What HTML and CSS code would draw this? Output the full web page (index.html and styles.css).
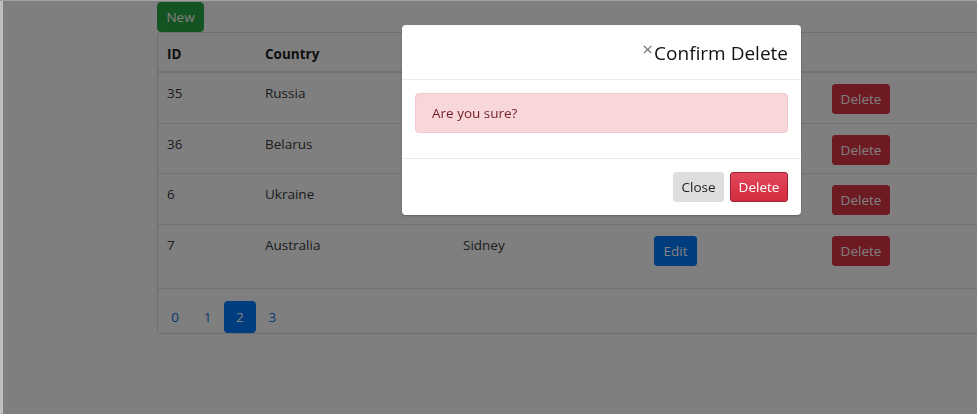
FILE: index.html
```html
<!DOCTYPE html>
<html>
<head>
<meta charset="utf-8">
<link rel="stylesheet" href="styles.css">
</head>
<body>
<div class="page">
  <div class="container">
    <button class="btn btn-new">New</button>
    <div class="card">
      <table class="grid">
        <thead>
          <tr><th class="c1">ID</th><th class="c2">Country</th><th class="c3">City</th><th class="c4"></th><th class="c5"></th></tr>
        </thead>
        <tbody>
          <tr><td>35</td><td>Russia</td><td>Moscow</td><td><button class="btn btn-edit">Edit</button></td><td><button class="btn btn-del">Delete</button></td></tr>
          <tr><td>36</td><td>Belarus</td><td>Minsk</td><td><button class="btn btn-edit">Edit</button></td><td><button class="btn btn-del">Delete</button></td></tr>
          <tr><td>6</td><td>Ukraine</td><td>Kiev</td><td><button class="btn btn-edit">Edit</button></td><td><button class="btn btn-del">Delete</button></td></tr>
          <tr class="last"><td>7</td><td>Australia</td><td>Sidney</td><td><button class="btn btn-edit">Edit</button></td><td><button class="btn btn-del">Delete</button></td></tr>
        </tbody>
      </table>
      <div class="pager">
        <a class="page-link">0</a>
        <a class="page-link">1</a>
        <a class="page-link active">2</a>
        <a class="page-link">3</a>
      </div>
    </div>
  </div>
</div>
<div class="backdrop"></div>
<div class="frame-left"></div>
<div class="frame-top"></div>
<div class="modal">
  <div class="modal-header">
    <span class="close">×</span>
    <h4 class="modal-title">Confirm Delete</h4>
  </div>
  <div class="modal-body">
    <div class="alert">Are you sure?</div>
  </div>
  <div class="modal-footer">
    <button class="btn btn-close">Close</button>
    <button class="btn btn-confirm">Delete</button>
  </div>
</div>
</body>
</html>
```
FILE: styles.css
```css
html, body {
  margin: 0;
  padding: 0;
  height: 100%;
  overflow: hidden;
  background: #fff;
  font-family: "Open Sans", "Noto Sans", sans-serif;
  font-size: 13.5px;
  color: #212529;
}

.page {
  padding-top: 2px;
}

.container {
  margin-left: 157px;
  width: 820px;
}

.btn {
  font-family: inherit;
  font-size: 13.5px;
  border: 1px solid transparent;
  border-radius: 3px;
  height: 30px;
  padding: 0 11px;
  color: #fff;
  cursor: pointer;
  line-height: 28px;
}

.btn-new {
  display: block;
  width: 47px;
  height: 30px;
  padding: 0;
  background: #28a745;
  border-color: #28a745;
  border-radius: 4px;
}

.card {
  border: 1px solid rgba(0, 0, 0, 0.125);
  border-right: 0;
  border-radius: 3px 0 0 3px;
}

.grid {
  border-collapse: collapse;
  width: 100%;
  table-layout: fixed;
}

.grid th {
  text-align: left;
  font-weight: 700;
  height: 35px;
  padding: 3px 9px 0;
  border-bottom: 2px solid #dee2e6;
  line-height: 20px;
  color: #1b1e21;
}

.grid .c1 { width: 80px; }
.grid .c2 { width: 180px; }
.grid .c3 { width: 173px; }
.grid .c4 { width: 160px; }

.grid td {
  vertical-align: top;
  padding: 10px 9px 8.5px;
  line-height: 20px;
  border-top: 1px solid #dee2e6;
  color: #3a3a3a;
}

.grid td .btn {
  margin-top: 1px;
}

.grid tbody tr:first-child td {
  border-top: 0;
}

.grid tr.last td {
  padding-bottom: 22px;
}

.btn-edit {
  background: #007bff;
  border-color: #007bff;
  width: 43px;
  padding: 0;
}

.btn-del {
  background: #dc3545;
  border-color: #dc3545;
  width: 58px;
  padding: 0;
}

.pager {
  display: flex;
  border-top: 1px solid #dee2e6;
  padding: 12px 0 0 1px;
}

.page-link {
  display: block;
  width: 32.4px;
  height: 32px;
  line-height: 32px;
  text-align: center;
  color: #0a6fe0;
  border-radius: 4px;
  font-size: 13.5px;
}

.page-link.active {
  background: #007bff;
  color: #fff;
}

.backdrop {
  position: fixed;
  inset: 0;
  background: rgba(0, 0, 0, 0.5);
}

.frame-left {
  position: fixed;
  left: 0;
  top: 0;
  bottom: 0;
  width: 3px;
  background: #bfbfbf;
}

.frame-top {
  position: fixed;
  left: 0;
  right: 0;
  top: 0;
  height: 1px;
  background: #a3a3a3;
}

.modal {
  position: fixed;
  left: 402px;
  top: 25px;
  width: 399px;
  background: #fff;
  border-radius: 4px;
  box-shadow: 0 1px 2px rgba(0, 0, 0, 0.25);
}

.modal-header {
  display: flex;
  justify-content: flex-end;
  align-items: flex-start;
  padding: 0 13px;
  border-bottom: 1px solid #e9ecef;
  box-sizing: border-box;
  height: 55px;
}

.close {
  font-size: 19px;
  line-height: 1;
  color: #777;
  margin-top: 15px;
  margin-right: 1px;
}

.modal-title {
  margin: 0;
  font-size: 19px;
  font-weight: 400;
  line-height: 28px;
  margin-top: 14px;
  color: #111;
}

.modal-body {
  padding: 13px 13px 25px;
}

.alert {
  background: #f8d7da;
  border: 1px solid #f5c6cb;
  color: #721c24;
  border-radius: 4px;
  padding: 9px 16px;
  line-height: 20px;
}

.modal-footer {
  display: flex;
  justify-content: flex-end;
  gap: 6px;
  border-top: 1px solid #e9ecef;
  padding: 13px;
}

.btn-close {
  background: #dedede;
  border-color: #dedede;
  color: #222;
  width: 51px;
  padding: 0;
}

.btn-confirm {
  background: linear-gradient(#e2475a, #d42c40);
  border-color: #9e1f2d;
  width: 58px;
  padding: 0;
}
```
